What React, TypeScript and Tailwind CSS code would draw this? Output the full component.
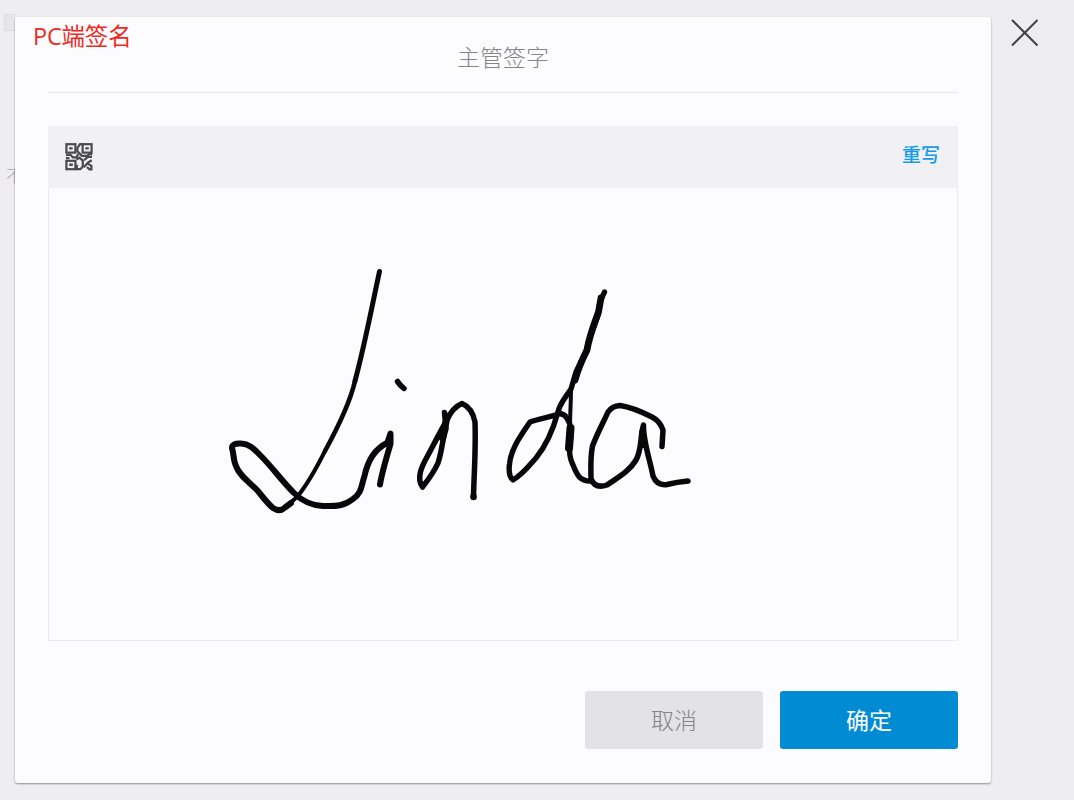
import { ReactNode } from "react";

interface ActionButtonProps {
    children: ReactNode;
    className: string;
}

const ActionButton: React.FC<ActionButtonProps> = ({
    children,
    className,
}: ActionButtonProps) => {
    return (
        <button
            className={`h-[58px] w-[178px] rounded-[3px] text-[23px] ${className}`}
        >
            {children}
        </button>
    );
};

const QrIcon = () => {
    return (
        <svg
            className="h-7 w-7"
            viewBox="0 0 28 28"
            fill="none"
            stroke="#4a4a4c"
            strokeWidth="2.2"
        >
            <rect x="1.4" y="1.2" width="9" height="8.4" />
            <path d="M4.2 5.4h3.4M20.4 5.4h3.4M4.2 21.8h3.6" strokeWidth="2.4" />
            <rect x="17.6" y="1.2" width="9" height="8.4" />
            <rect x="1.4" y="17.8" width="9" height="8.4" />
            <path d="M17 1.2h-2l-2.6 3.8v3.4l4.4 4.4h5.4l2-1.6h3" />
            <path d="M1 11.8h4.5l2.4 2.6h3.6l1.6-3.4M1 15.2h3.4" />
            <path d="M11.4 16.6l3-2 3.4 3v6l-2.4 2.6h-3.6v-4.4" />
            <path d="M27 13.8h-4l-4 3.4M26.8 17.2l-3.6 2.2-4.4 4.8M22.4 20.4l4 2.4v3.6h-2l-2.4-2.4" />
        </svg>
    );
};

const Signature = () => {
    return (
        <svg
            className="block h-[452px] w-full"
            viewBox="49 188 908 452"
            fill="none"
            stroke="#080808"
            strokeLinecap="round"
            strokeLinejoin="round"
        >
            {/* L, the long stroke gets thinner on its way down */}
            <path d="M379.500 271.500C372 306 365 344 355 381" strokeWidth="5" />
            <path d="M355 381C350 403 337 429 325 451" strokeWidth="4.6" />
            <path d="M325 451C316 469 307 485 297 497L281 511" strokeWidth="4" />
            <path d="M291 503L285 507.500Q280 512.500 273 508C267 503 263 497 257 490C248 481 239 475 236 466C233 460 234 454 232 448Q232 443 241 443.500C250 444 254 449 261 456C272 467 282 481 294 493C302 501 312 505.500 323 506C337 506.500 344 506 353 499C362 493 361 486 364.500 476C367 464 373 450 387 443" strokeWidth="6" />
            <path d="M387 444L390.500 433.500L390.500 444C386 459 382 472 380 484.500" strokeWidth="6" />
            {/* i dot */}
            <path d="M397.500 381.500C399 384 401 386 404 388.500" strokeWidth="5.5" />
            {/* n */}
            <path d="M444.500 412.500L446 429C442 441 442 451 438 463C434 472 428 480 422.500 487C416 478 422 466 427 457C434 444 440 432 447 420C451 411 456 406 462 403.500C468 406 473 412 475 422C476 448 474 474 473.500 497" strokeWidth="5.5" />
            <path d="M446 422L442.500 438" strokeWidth="7" />
            <path d="M473.500 496.500v.5" strokeWidth="6.5" />
            {/* d */}
            <path d="M601 298L598.500 312C594 324 589 337 587 350C582 360 578 369 575 380" strokeWidth="6.8" />
            <path d="M604.500 292L600 302L598 315L590 337L586 352L576 372L571 389C566 397 560 403 558 412C553 430 545 447 536 458C529 466 522 475 513 480Q508 476 509.500 464C511 448 522 434 530 422C540 418 552 417 560 413.500Q569 415 571 430C571 448 567 453 573 465C577 475 580 482 592 481" strokeWidth="5.4" />
            <path d="M571 389C571 402 570 414 570 427" strokeWidth="4" />
            <path d="M570.500 428L569 448" strokeWidth="8" />
            {/* a */}
            <path d="M662 446.500L663 430Q660 421 652 417C642 412 631 407 620 405.500Q612 406 608 412C604 421 597 434 592.500 446C590 459 591 470 591 479Q595 489 607 485C617 478 629 472 636 460C642 450 640 436 643.500 425C643 441 650 460 653 476Q657 486 667 484.500Q677 482 688 481" strokeWidth="5.5" />
            <path d="M642.500 432L642.500 445" strokeWidth="6.5" />
        </svg>
    );
};

const SignDialog = () => {
    return (
        <div className="mt-[17px] h-[766px] w-[976px] rounded-[3px] bg-[#fcfbfd] px-[33px] shadow-[0_1px_2px_rgba(0,0,0,0.4)]">
            <div className="relative flex h-[76px] items-center justify-center border-b border-[#e6e5e7] pt-[5px]">
                <span className="absolute left-[-15px] top-[2px] text-[23.500px] leading-[34px] tracking-[-0.2px] text-[#ee2a24]">
                    PC端签名
                </span>
                <h1 className="text-[23px] font-light leading-[34px] text-[#858487]">
                    主管签字
                </h1>
            </div>
            <div className="mt-[33px] h-[515px] border border-t-0 border-[#eae9eb]">
                <div className="-mx-px flex h-[62px] items-center justify-between bg-[#f1f0f2] pl-[17px] pr-[18px]">
                    <QrIcon />
                    <button className="pb-[3px] text-[19px] font-medium text-[#149bed]">
                        重写
                    </button>
                </div>
                <Signature />
            </div>
            <div className="mt-[50px] flex justify-end gap-[17px]">
                <ActionButton className="bg-[#e3e2e4] font-light text-[#858487]">
                    取消
                </ActionButton>
                <ActionButton className="bg-[#008bd2] text-white">
                    确定
                </ActionButton>
            </div>
        </div>
    );
};

export default function App() {
    return (
        <div className="flex h-[800px] w-[1074px] overflow-hidden bg-[#eeedef] font-['Open_Sans','Noto_Sans_CJK_SC',sans-serif]">
            {/* slice of the page behind the dialog */}
            <div className="w-[15px] shrink-0 overflow-hidden">
                <div className="ml-1 mt-[14px] h-[17px] w-5 border border-[#dddcde] bg-[#e6e5e7]" />
                <div className="ml-[6px] mt-[133px] w-5 text-[17px] font-light leading-6 text-[#a9a8aa]">
                    不
                </div>
            </div>
            <SignDialog />
            <button className="ml-5 mt-[19px] h-7 w-7">
                <svg
                    className="h-7 w-7"
                    viewBox="0 0 28 28"
                    fill="none"
                    stroke="#424244"
                    strokeWidth="2"
                >
                    <path d="M1 1l25.500 25.500M26.500 1L1 26.500" />
                </svg>
            </button>
        </div>
    );
}
